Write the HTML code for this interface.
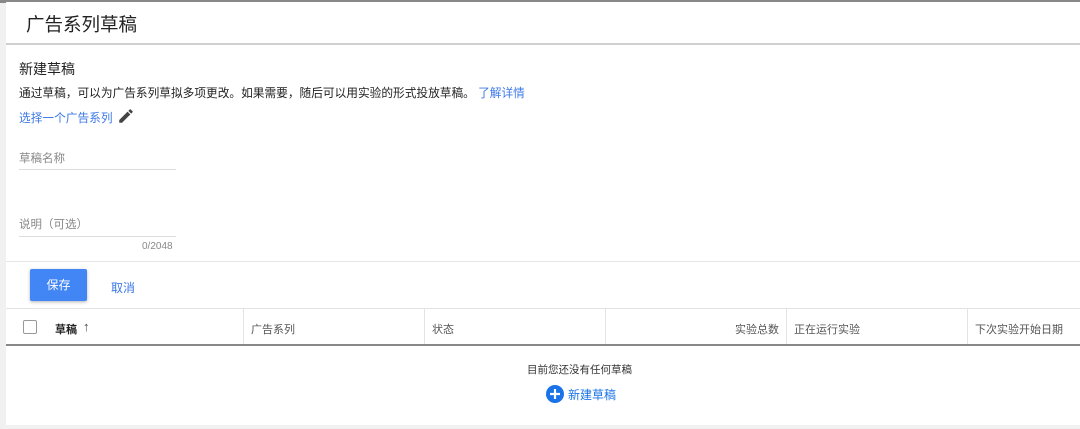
<!DOCTYPE html>
<html><head><meta charset="utf-8"><style>
*{margin:0;padding:0;box-sizing:border-box}
body{width:1080px;height:429px;overflow:hidden;background:#f1f1f1;font-family:"Liberation Sans","Noto Sans CJK SC",sans-serif;position:relative}
.a{position:absolute}
.page{left:6px;top:2px;width:1074px;height:423px;background:#fff}
.t{white-space:nowrap}
</style></head><body>
<div class="a" style="left:0;top:0;width:1080px;height:3px;background:#888"></div>
<div class="a page"></div>
<div class="a" style="left:6px;top:43px;width:1074px;height:2px;background:#d0d0d0"></div>
<div class="a t" style="left:26px;top:11px;font-size:18.5px;color:#222">广告系列草稿</div>
<div class="a t" style="left:19px;top:59px;font-size:14px;color:#222">新建草稿</div>
<div class="a t" style="left:19px;top:84px;font-size:11.7px;color:#222">通过草稿，可以为广告系列草拟多项更改。如果需要，随后可以用实验的形式投放草稿。 <span style="color:#3b78e7">了解详情</span></div>
<div class="a t" style="left:19px;top:109px;font-size:11.7px;color:#3b78e7">选择一个广告系列</div>
<svg class="a" style="left:117px;top:107px" width="18" height="18" viewBox="0 0 24 24"><path fill="#444" d="M3 17.25V21h3.75L17.8 9.94l-3.75-3.75L3 17.25zM20.7 7.04a1 1 0 0 0 0-1.41l-2.34-2.34a1 1 0 0 0-1.41 0l-1.83 1.83 3.75 3.75 1.83-1.83z"/></svg>
<div class="a t" style="left:19px;top:150px;font-size:11.5px;color:#888">草稿名称</div>
<div class="a" style="left:19px;top:169px;width:157px;height:1px;background:#ddd"></div>
<div class="a t" style="left:19px;top:216px;font-size:11.5px;color:#888">说明（可选）</div>
<div class="a" style="left:19px;top:236px;width:157px;height:1px;background:#ddd"></div>
<div class="a t" style="left:142px;top:241px;font-size:10px;color:#888">0/2048</div>
<div class="a" style="left:6px;top:261px;width:1074px;height:1px;background:#e6e6e6"></div>
<div class="a" style="left:30px;top:269px;width:57px;height:32px;background:#4285f4;border-radius:2px;box-shadow:0 1px 3px rgba(0,0,0,.3);color:#fff;font-size:12px;text-align:center;line-height:32px">保存</div>
<div class="a t" style="left:111px;top:279px;font-size:12px;color:#3b78e7">取消</div>
<div class="a" style="left:6px;top:308px;width:1074px;height:1px;background:#e3e3e3"></div>
<div class="a" style="left:23px;top:320px;width:14px;height:14px;border:1.5px solid #999;border-radius:2px"></div>
<div class="a t" style="left:55px;top:321px;font-size:11px;color:#222;font-weight:bold">草稿</div>
<div class="a t" style="left:83px;top:319px;font-size:13px;color:#444">↑</div>
<div class="a t" style="left:251px;top:321px;font-size:11px;color:#555">广告系列</div>
<div class="a t" style="left:432px;top:321px;font-size:11px;color:#555">状态</div>
<div class="a t" style="left:735px;top:321px;font-size:11px;color:#555">实验总数</div>
<div class="a t" style="left:794px;top:321px;font-size:11px;color:#555">正在运行实验</div>
<div class="a t" style="left:975px;top:321px;font-size:11px;color:#555">下次实验开始日期</div>
<div class="a" style="left:243px;top:309px;width:1px;height:36px;background:#e3e3e3"></div>
<div class="a" style="left:424px;top:309px;width:1px;height:36px;background:#e3e3e3"></div>
<div class="a" style="left:605px;top:309px;width:1px;height:36px;background:#e3e3e3"></div>
<div class="a" style="left:786px;top:309px;width:1px;height:36px;background:#e3e3e3"></div>
<div class="a" style="left:967px;top:309px;width:1px;height:36px;background:#e3e3e3"></div>
<div class="a" style="left:6px;top:344px;width:1074px;height:2px;background:#888"></div>
<div class="a t" style="left:527px;top:362px;font-size:10.5px;color:#333">目前您还没有任何草稿</div>
<svg class="a" style="left:546px;top:385px" width="18" height="18" viewBox="0 0 18 18"><circle cx="9" cy="9" r="9" fill="#1a73e8"/><path d="M9 4v10M4 9h10" stroke="#fff" stroke-width="2.2"/></svg>
<div class="a t" style="left:568px;top:386px;font-size:12px;color:#1a73e8">新建草稿</div>
</body></html>
